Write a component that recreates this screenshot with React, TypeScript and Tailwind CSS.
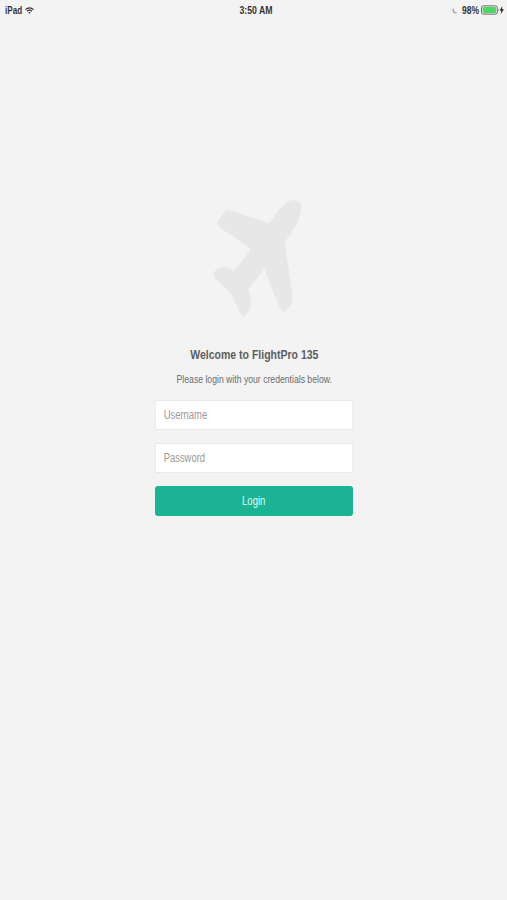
import { useState } from 'react';

const StatusBar = () => (
  <header className="grid h-[21px] grid-cols-3 items-center text-[10px] leading-5 font-bold text-[#333]">
    <div className="flex items-center gap-[3px] pl-[5px]">
      <span className="w-[17px] origin-left scale-x-[0.81] whitespace-nowrap">iPad</span>
      <svg className="h-[7px] w-[9px]" viewBox="0 0 18 14" fill="none" stroke="#333" strokeWidth="2.4">
        <path d="M1 5.2C5.5.6 12.500.6 17 5.200" />
        <path d="M4 8.600C7 5.700 11 5.700 14 8.600" />
        <path d="M6.500 10.800Q9 8.700 11.500 10.800L9 13.500Z" fill="#333" stroke="none" />
      </svg>
    </div>
    <div className="flex justify-center pl-[4px]">
      <span className="scale-x-[0.87] whitespace-nowrap">3:50 AM</span>
    </div>
    <div className="flex items-center justify-end pr-[3px]">
      <svg className="mr-[4px] h-[7px] w-[6px]" viewBox="0 0 12 14" fill="#999">
        <path d="M4 1C1 3 0 7 2 10C4 13 8 14 11 11C5 12 2 7 4 1Z" />
      </svg>
      <span className="w-[19px] origin-left scale-x-[0.85] whitespace-nowrap">98%</span>
      <svg className="mb-px h-[10px] w-[23px]" viewBox="0 0 23 10">
        <rect x="0.500" y="0.900" width="15.800" height="8.200" rx="1.800" fill="#f3f3f3" stroke="#666" />
        <rect x="1.700" y="2.100" width="13.400" height="5.800" rx="0.800" fill="#4cd964" />
        <path d="M17 3.500Q18.300 5 17 6.500Z" fill="#666" />
        <path d="M21.300 1L18.600 5.500H20.300L19.700 9L23 4.300H21Z" fill="#222" />
      </svg>
    </div>
  </header>
);

const PlaneLogo = () => (
  <svg className="h-[140px] w-[120px]" viewBox="0 0 360 420" fill="#e7e7e7">
    <path d="M207 100C226 75 247 43 267 33C282 25 304 34 304 50C305 88 277 128 253 157L276 300Q278 315 276 342L255 366Q249 369 244 360L232 337L193 236L144 300Q153 315 151 330L154 350L136 377Q130 384 124 376L99 326Q93 308 70 289L45 266C35 250 49 232 66 231Q82 229 100 245Q125 218 151 180L143 168L56 111Q48 101 54 92L76 64Q80 57 90 61Z" />
  </svg>
);

const App = () => {
  const [username, setUsername] = useState('');
  const [password, setPassword] = useState('');

  const inputClass =
    'block h-[30px] w-[252px] origin-left scale-x-[0.786] border border-[#e9e9e9] bg-white px-[10px] text-[12px] text-[#676a6c] outline-none placeholder:text-[#999]';

  return (
    <div className="min-h-screen bg-[#f3f3f3] font-['Liberation_Sans',Arial,sans-serif]">
      <StatusBar />
      <main className="flex flex-col items-center pt-[169px]">
        <div className="mr-[-13px]">
          <PlaneLogo />
        </div>
        <h1 className="mt-[15px] ml-px scale-x-[0.808] text-[13px] leading-5 font-bold whitespace-nowrap text-[#5c5e60]">
          Welcome to FlightPro 135
        </h1>
        <p className="mt-[4px] ml-px scale-x-[0.752] text-[11.5px] leading-5 whitespace-nowrap text-[#6b6d6f]">
          Please login with your credentials below.
        </p>
        <form className="mt-[10.5px] w-[198px]" onSubmit={(e) => e.preventDefault()}>
          <input
            className={inputClass}
            placeholder="Username"
            value={username}
            onChange={(e) => setUsername(e.target.value)}
          />
          <input
            className={`${inputClass} mt-[13px]`}
            type="password"
            placeholder="Password"
            value={password}
            onChange={(e) => setPassword(e.target.value)}
          />
          <button type="submit" className="mt-[13px] block h-[30px] w-full rounded-[3px] bg-[#1ab394] text-[12px] text-[#e6f7f3]">
            <span className="inline-block scale-x-[0.79]">Login</span>
          </button>
        </form>
      </main>
    </div>
  );
};

export default App;
